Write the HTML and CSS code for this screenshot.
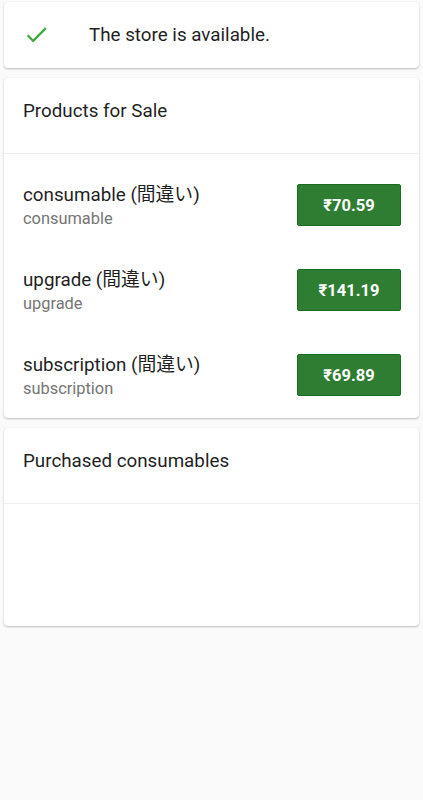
FILE: index.html
```html
<!DOCTYPE html>
<html lang="en">
  <head>
    <meta charset="UTF-8" />
    <meta name="viewport" content="width=device-width, initial-scale=1.0" />
    <title>IAP Example</title>
    <link rel="stylesheet" href="styles.css">
  </head>
  <body>
    <div id="container">
      <!-- ストアの状態 -->
      <div class="card">
        <div class="status">
          <svg class="status-icon" viewBox="0 0 24 24" width="27" height="27">
            <path d="M9 16.17L4.83 12l-1.42 1.41L9 19 21 7l-1.41-1.41z" fill="#3fa83f" />
          </svg>
          <span class="status-text">The store is available.</span>
        </div>
      </div>

      <div class="card">
        <div class="card-title">Products for Sale</div>
        <div class="divider"></div>
        <div class="product">
          <div class="product-info">
            <div class="product-title">consumable (間違い)</div>
            <div class="product-sub">consumable</div>
          </div>
          <button class="buy-button">₹70.59</button>
        </div>
        <div class="product">
          <div class="product-info">
            <div class="product-title">upgrade (間違い)</div>
            <div class="product-sub">upgrade</div>
          </div>
          <button class="buy-button">₹141.19</button>
        </div>
        <div class="product">
          <div class="product-info">
            <div class="product-title">subscription (間違い)</div>
            <div class="product-sub">subscription</div>
          </div>
          <button class="buy-button">₹69.89</button>
        </div>
      </div>

      <div class="card">
        <div class="card-title">Purchased consumables</div>
        <div class="divider"></div>
        <div class="consumables"></div>
      </div>
    </div>
  </body>
</html>
```

FILE: styles.css
```css
html {
  height: 100%;
}
body {
  height: 100%;
  margin: 0;
  background-color: #fafafa;
  font-family: Roboto, "Noto Sans CJK JP", sans-serif;
  color: #1f1f1f;
}
#container {
  display: flex;
  flex-direction: column;
  gap: 10px;
  padding: 2px 4px;
}

.card {
  background: #fff;
  border-radius: 4px;
  box-shadow: 0 1px 2px rgba(0, 0, 0, 0.25), 0 0 1px rgba(0, 0, 0, 0.08);
}

.status {
  display: flex;
  align-items: center;
  height: 66px;
  padding: 0 19px;
}
.status-icon {
  flex-shrink: 0;
  margin-top: -1px;
}
.status-text {
  margin-left: 39px;
  font-size: 18.8px;
}

.card-title {
  display: flex;
  align-items: center;
  height: 66px;
  padding: 0 19px;
  font-size: 18.8px;
}

/* 区切り線 */
.divider {
  height: 19px;
  display: flex;
  align-items: center;
}
.divider::before {
  content: "";
  flex: 1;
  height: 1px;
  background: #eeeeee;
}

.product {
  display: flex;
  align-items: center;
  justify-content: space-between;
  height: 85px;
  padding: 0 18px 0 19px;
}
.product-title {
  font-size: 18.8px;
  line-height: 26px;
}
.product-sub {
  font-size: 16.4px;
  line-height: 21.5px;
  color: #757575;
}

.buy-button {
  width: 104px;
  height: 42px;
  margin-top: -1px;
  background: #2e7d32;
  border: 1px solid #1b6b20;
  border-radius: 2px;
  color: #fff;
  font-family: Roboto, sans-serif;
  font-size: 16.5px;
  font-weight: bold;
  padding: 0;
}

.consumables {
  height: 113px;
}
```
